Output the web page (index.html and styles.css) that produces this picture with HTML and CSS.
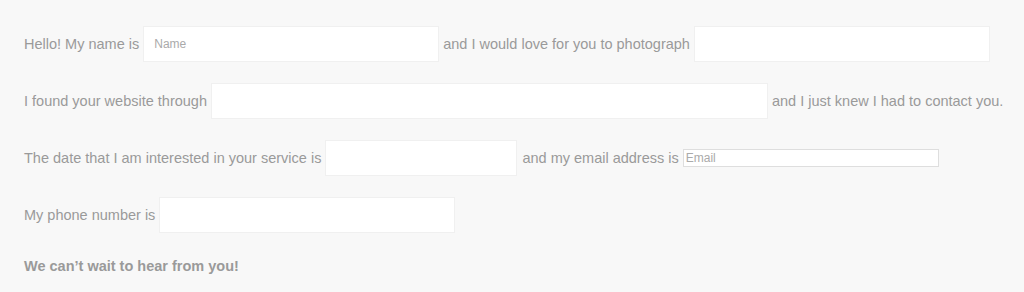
FILE: index.html
```html
<!DOCTYPE html>
<html>
<head>
<meta charset="utf-8">
<link rel="stylesheet" href="styles.css">
</head>
<body>
<form class="letter">
  <div class="row">
    <span>Hello! My name is</span>
    <input class="field w296" type="text" placeholder="Name">
    <span>and I would love for you to photograph</span>
    <input class="field w296" type="text">
  </div>
  <div class="row">
    <span>I found your website through</span>
    <input class="field w557" type="text">
    <span>and I just knew I had to contact you.</span>
  </div>
  <div class="row">
    <span>The date that I am interested in your service is</span>
    <input class="field w192" type="text">
    <span class="email-label">and my email address is</span>
    <input class="email" type="email" placeholder="Email">
  </div>
  <div class="row">
    <span>My phone number is</span>
    <input class="field w296" type="text">
  </div>
  <p class="closing">We can’t wait to hear from you!</p>
</form>
</body>
</html>
```

FILE: styles.css
```css
html, body {
  margin: 0;
  padding: 0;
  background: #f8f8f8;
}

body {
  font-family: "Liberation Sans", Arial, Helvetica, sans-serif;
  font-size: 14.5px;
  color: #9a9a9a;
}

.letter {
  padding: 26px 0 0 24px;
  display: flex;
  flex-direction: column;
  gap: 21px;
}

.row {
  display: flex;
  align-items: center;
  gap: 4px;
  height: 36px;
  white-space: nowrap;
}

.field {
  box-sizing: border-box;
  height: 36px;
  margin: 0;
  padding: 0 10px;
  background: #fff;
  border: 1px solid #f0f0f0;
  border-radius: 0;
  outline: none;
  font-family: "Liberation Sans", Arial, Helvetica, sans-serif;
  font-size: 12px;
  color: #999;
}

.field::placeholder,
.email::placeholder {
  color: #aaa;
}

.w296 { width: 296px; }
.w557 { width: 557px; }
.w192 { width: 192px; }

.email-label {
  margin-left: 1px;
}

.email {
  box-sizing: border-box;
  width: 256px;
  height: 18px;
  margin: 0;
  padding: 0 2px;
  background: #fff;
  border: 1px solid #dedede;
  border-radius: 0;
  outline: none;
  font-family: "Liberation Sans", Arial, Helvetica, sans-serif;
  font-size: 12px;
  color: #999;
}

.closing {
  margin: 4px 0 0;
  font-weight: bold;
  line-height: 16px;
}
```
